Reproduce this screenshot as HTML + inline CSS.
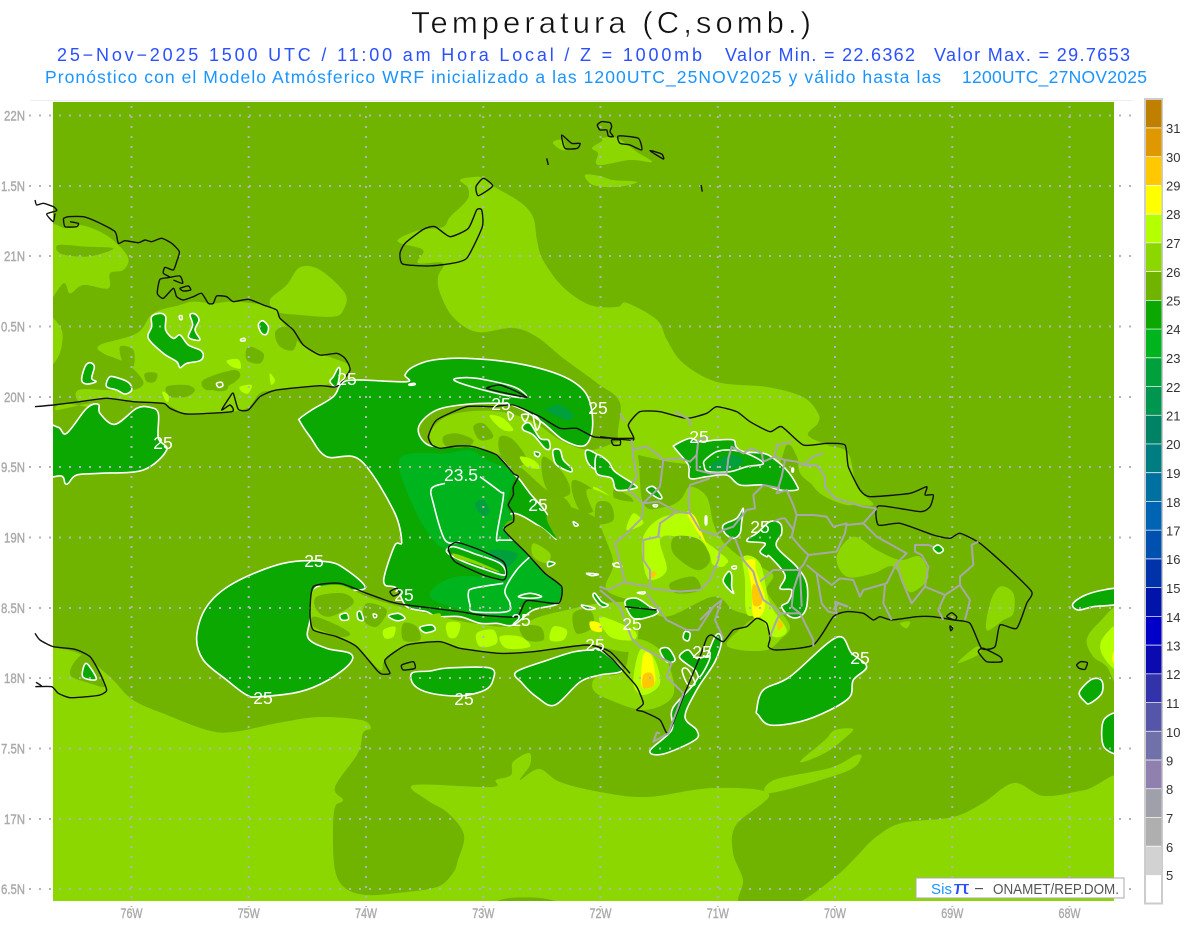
<!DOCTYPE html>
<html><head><meta charset="utf-8"><title>Temperatura</title>
<style>
html,body{margin:0;padding:0;background:#fff}
svg{display:block}
polygon,polyline,line,rect,path{vector-effect:non-scaling-stroke}
.lt{fill:#8cd700}.bs{fill:#70b400}.br{fill:#b4ff00}.ye{fill:#ffff00}.or{fill:#ffc800}
.dk{fill:#0aa800;stroke:#fff;stroke-width:1.6;stroke-linejoin:round}
.dk2{fill:#00b41e}.dk3{fill:#00a03c}
.wl{fill:none;stroke:#fff;stroke-width:1.6;stroke-linejoin:round}
.co{fill:none;stroke:#111;stroke-width:1.4;stroke-linejoin:round}
.pr{fill:none;stroke:#a8a8a8;stroke-width:2;stroke-linejoin:round}
.ax{font:14px "Liberation Sans",sans-serif;fill:#aaa;stroke:#aaa;stroke-width:.4}
.lb{font:17.5px "Liberation Sans",sans-serif;fill:#fff}
.cb{font:13px "Liberation Sans",sans-serif;fill:#333}
</style></head><body>
<svg width="1200" height="927" viewBox="0 0 1200 927" xmlns="http://www.w3.org/2000/svg">
<defs><clipPath id="m"><rect x="53" y="102" width="1061" height="799"/></clipPath></defs>
<rect width="1200" height="927" fill="#fff"/>
<text x="411" y="33" font-family="Liberation Sans" font-size="31" fill="#111" stroke="#fff" stroke-width=".5" textLength="400" lengthAdjust="spacing">Temperatura (C,somb.)</text>
<g font-family="Liberation Sans" font-size="18" fill="#2a50ff">
<text x="57" y="61" textLength="645" lengthAdjust="spacing">25−Nov−2025 1500 UTC / 11:00 am Hora Local / Z = 1000mb</text>
<text x="725" y="61" textLength="190" lengthAdjust="spacing">Valor Min. = 22.6362</text>
<text x="934" y="61" textLength="196" lengthAdjust="spacing">Valor Max. = 29.7653</text>
</g>
<g font-family="Liberation Sans" font-size="17.5" fill="#1a94ff">
<text x="45" y="83" textLength="896" lengthAdjust="spacing">Pronóstico con el Modelo Atmósferico WRF inicializado a las 1200UTC_25NOV2025 y válido hasta las</text>
<text x="962" y="83" textLength="185" lengthAdjust="spacing">1200UTC_27NOV2025</text>
</g>
<line x1="30" y1="100.5" x2="1133" y2="100.5" stroke="#eee"/>
<rect x="53" y="102" width="1061" height="799" fill="#70b400"/>
<g clip-path="url(#m)">
<!-- sea light zones -->
<polygon class="lt" points="40,645 53,647 82,655 110,677 133,700 167,715 207,730 233,732 283,722 320,717 361,720 371,728 363,733 358,753 335,787 343,800 335,807 333,833 335,870 345,888 366,895 397,893 437,887 453,873 458,860 464,835 448,813 427,800 414,785 491,787 496,780 511,775 513,762 529,753 530,765 520,780 539,769 560,782 600,792 647,797 713,788 769,794 736,825 733,853 743,880 741,905 792,905 835,877 856,857 876,837 902,823 953,817 983,803 1014,783 1044,796 1085,790 1130,782 1130,920 40,920"/>
<polygon class="bs" points="498,903 510,898 540,898 556,903"/>
<polygon class="lt" points="771,793 774,780 830,768 856,755 861,758 845,772"/>
<polygon class="lt" points="800,762 825,740 835,730 853,729 845,738 825,753"/>
<polygon class="lt" points="460,180 473,177 483,178 493,186 520,202 533,217 537,240 543,260 563,287 590,305 617,307 627,303 657,320 667,340 683,363 717,382 767,387 803,397 818,413 818,423 808,435 827,445 848,453 857,487 873,505 840,500 803,477 797,457 787,445 770,470 700,465 660,460 620,445 620,403 597,383 563,358 537,337 513,328 477,332 453,317 440,293 438,277 443,263 418,263 423,250 400,243 400,238 420,230 443,227 450,217 467,200 468,188"/>
<polygon class="lt" points="553,142 563,140 565,150 558,148"/>
<polygon class="lt" points="592,148 602,141 602,138 617,138 637,152 652,162 630,160 598,165 598,153"/>
<polygon class="lt" points="585,175 600,176 613,180 637,182 617,187 593,185"/>
<g transform="translate(0 190) scale(.33333)">
<polygon class="lt" points="130,115 200,115 240,105 300,125 350,160 385,205 370,240 330,250 325,295 250,285 210,310 190,280 130,340"/>
<polygon class="bs" points="175,165 260,170 340,175 290,195 240,200 180,190"/>
<polygon class="lt" points="130,375 185,420 175,500 130,530"/>
<polygon class="lt" points="810,330 860,285 900,232 960,240 1035,310 1030,360 1000,380 900,375 830,365"/>
<polygon class="lt" points="300,465 410,430 460,370 540,345 580,335 640,340 700,335 790,345 830,365 840,385 900,460 960,490 1040,520 1050,540 1000,580 830,600 780,610 740,655 650,670 560,672 490,640 400,635 320,625 240,635 235,600 320,600 400,600 430,575 380,520 310,490"/>
<polygon class="lt" points="170,660 270,640 290,655 190,640"/>
<polygon class="bs" points="500,590 560,585 585,600 560,620 510,620"/>
<polygon class="bs" points="435,550 470,550 465,575 440,575"/>
<polygon class="bs" points="850,410 890,430 880,480 840,470 825,430"/>
<polygon class="bs" points="610,570 700,540 720,560 680,590 620,600"/>
<polygon class="bs" points="745,470 790,490 780,520 740,510"/>
<polygon class="bs" points="640,570 680,570 680,600 640,600"/>
<polygon class="bs" points="360,470 400,480 400,530 370,520"/>
<polygon class="br" points="680,512 715,508 722,535 695,530"/>
<polygon class="br" points="720,590 755,585 745,610 725,605"/>
<polygon class="br" points="810,550 825,570 815,585 810,570"/>
<polygon class="br" points="487,605 505,615 505,635 495,630"/>
</g>
<!-- Jamaica area -->
<g transform="translate(0 560) scale(.33333)">
<polygon class="bs" points="215,320 245,285 275,295 300,340 315,380 270,370 215,350"/>
<polygon class="dk" points="590,230 620,140 700,70 850,10 980,5 1040,30 1095,85 1000,90 945,85 930,180 925,235 980,265 1050,280 1050,310 985,360 900,395 780,410 740,405 680,360 610,300"/>
<polygon class="dk" points="258,310 285,345 285,360 248,350"/>
</g>
<!-- east edge -->
<g transform="translate(960 560) scale(.33333)">
<polygon class="lt" points="480,150 415,190 380,240 400,290 440,320 480,380"/>
<polygon class="br" points="480,195 425,240 430,290 480,330"/>
<polygon class="ye" points="458,280 470,275 470,310 458,305"/>
<polygon class="dk" points="338,133 370,108 430,90 480,88 480,130 400,140 355,150"/>
<polygon class="dk" points="358,397 395,358 425,362 425,400 390,430 375,425"/>
<polygon class="dk" points="480,465 435,475 425,520 435,565 480,575"/>
</g>
<!-- Cuba darks -->
<g transform="translate(0 190) scale(.33333)">
<polygon class="dk" points="455,380 480,370 497,380 497,420 520,445 540,435 565,465 600,480 610,495 600,512 560,520 540,533 530,515 490,490 445,445 455,410"/>
<polygon class="dk" points="570,375 585,372 597,390 585,420 600,448 585,450 565,440 578,405"/>
<polygon class="dk" points="775,405 788,392 805,410 800,432 785,430"/>
<polygon class="dk" points="245,570 255,530 270,518 283,530 275,565 288,575 260,582"/>
<polygon class="dk" points="320,590 325,565 340,560 385,577 395,600 375,612 350,600"/>
<polygon class="dk" points="1000,560 1015,533 1020,545 1010,590 990,575"/>
<polygon class="dk" points="130,712 175,712 200,730 260,655 295,643 300,670 345,703 410,655 450,652 475,670 475,745 500,780 430,840 300,850 230,855 205,880 195,880 185,858 130,850"/>
<polygon class="wl" points="538,378 546,378 546,388 540,388"/>
<polygon class="wl" points="722,448 733,445 735,452 724,453"/>
<polygon class="wl" points="650,580 665,577 668,588 655,592"/>
</g>
<!-- Haiti / central -->
<g transform="translate(300 340) scale(.33333)">
<polygon class="dk" points="170,120 320,125 315,105 340,80 400,60 500,55 650,70 780,105 850,150 875,210 875,280 850,318 790,300 730,250 660,205 600,190 480,195 400,215 355,265 385,315 470,318 520,320 590,345 640,400 660,420 690,460 740,520 770,590 765,597 720,560 640,520 610,570 680,640 735,700 785,740 775,790 700,810 640,855 590,850 540,850 480,830 410,830 380,815 320,800 290,745 255,735 255,700 285,615 305,605 280,510 180,360 80,350 30,290 0,245 0,235 35,210 100,170 125,130"/>
<polygon class="dk2" points="300,355 440,340 510,330 560,360 640,400 620,490 640,545 610,570 690,640 780,740 770,785 670,785 640,830 530,820 400,780 405,740 470,710 560,710 610,715 440,630 400,600 340,500"/>
<polygon class="dk3" points="525,490 550,480 568,510 555,530 535,515"/>
<polygon class="dk3" points="570,630 650,640 625,680 590,665"/>
<polygon class="dk3" points="740,210 780,195 820,225 800,240"/>
<polygon class="dk" points="470,115 530,115 640,140 680,170 640,170 550,150 470,125"/>
<polygon class="wl" points="327,133 342,130 345,134 330,136"/>
<!-- N Haiti land -->
<polygon class="lt" points="390,280 430,235 500,215 600,215 700,245 780,300 870,330 1000,310 1030,490 1100,500 1200,470 1200,620 1100,700 1000,720 960,700 930,640 880,620 840,560 800,480 740,450 660,380 600,345 530,325 470,320 410,325"/>
<polygon class="bs" points="430,290 470,280 520,300 500,320 440,320"/>
<polygon class="bs" points="520,260 550,250 580,290 540,300"/>
<polygon class="bs" points="600,290 640,300 680,360 640,380 600,340"/>
<polygon class="bs" points="730,350 790,400 810,460 760,470 730,420"/>
<polygon class="bs" points="820,420 880,450 900,500 850,520 820,470"/>
<polygon class="bs" points="940,450 990,470 1000,500 960,520"/>
<polygon class="bs" points="800,500 900,540 950,600 890,630 830,560"/>
<polygon class="br" points="570,225 610,235 640,270 610,270 580,245"/>
<polygon class="br" points="660,350 700,360 720,385 680,380"/>
<polygon class="br" points="880,440 930,470 900,480"/>
<polygon class="br" points="960,510 1010,520 1000,550 960,540"/>
<!-- dark wedge SE Haiti -->
<polygon class="bs" points="615,570 680,640 735,700 785,740 785,790 840,810 900,790 960,740 1000,720 940,620 880,610 800,520 740,530 770,600 720,560 640,540"/>
<polygon class="lt" points="700,610 750,640 740,670 700,650"/>
<polygon class="lt" points="940,700 990,680 1000,720 960,745"/>
<polygon class="or" points="972,690 990,685 985,710 975,708"/>
<!-- S peninsula -->
<polygon class="lt" points="40,750 120,735 200,770 300,800 380,820 520,850 640,860 720,830 800,810 900,790 1000,800 1000,930 860,915 700,935 600,940 480,925 420,905 320,915 255,960 240,990 170,920 110,890 40,870 30,820"/>
<polygon class="bs" points="50,770 130,760 160,790 90,830 50,810"/>
<polygon class="bs" points="40,830 100,850 150,880 120,890 40,860"/>
<polygon class="bs" points="200,790 260,810 230,860 190,840"/>
<polygon class="bs" points="310,850 350,860 360,900 310,900"/>
<polygon class="bs" points="820,820 870,810 880,860 830,880"/>
<polygon class="bs" points="660,860 720,860 730,900 680,900"/>
<polygon class="br" points="250,870 285,860 280,890 255,895"/>
<polygon class="br" points="440,850 480,850 470,890 445,890"/>
<polygon class="br" points="530,880 580,870 590,910 540,920"/>
<polygon class="br" points="600,890 660,890 690,920 620,925"/>
<polygon class="br" points="760,860 800,870 790,900 750,900"/>
<polygon class="br" points="900,830 1000,870 1000,900 930,890"/>
<polygon class="ye" points="870,845 900,850 905,875 875,870"/>
<polygon class="lt" points="395,825 420,820 420,835 400,835"/>
<polygon class="dk" points="655,770 690,760 725,770 690,775"/>
<polygon class="dk" points="120,825 140,820 145,838 125,840"/>
<polygon class="dk" points="172,818 182,815 190,840 175,838"/>
<polygon class="dk" points="220,822 230,825 228,832 222,832"/>
<polygon class="dk" points="265,828 295,820 315,835 290,842"/>
<polygon class="dk" points="360,862 395,855 405,870 375,878"/>
<!-- N Haiti holes -->
<polygon class="dk" points="670,255 690,250 720,295 745,300 750,325 735,325 700,285 670,270"/>
<polygon class="wl" points="625,215 640,225 630,240 625,228"/>
<polygon class="wl" points="665,225 685,225 675,245"/>
<polygon class="wl" points="700,225 720,245 710,270"/>
<polygon class="dk" points="760,330 780,330 790,360 815,385 810,395 770,375 760,350"/>
<polygon class="dk" points="705,335 720,340 715,350 705,345"/>
<polygon class="dk" points="820,545 835,555 825,558"/>
<polygon class="dk" points="745,665 765,670 745,680"/>
<polygon class="dk" points="860,700 895,703 875,707"/>
<polygon class="dk" points="885,760 905,785 925,795 905,800 880,770"/>
<polygon class="dk" points="845,795 885,805 860,808"/>
<polygon class="dk" points="940,670 965,682 945,680"/>
<polygon class="dk" points="860,330 900,350 940,400 1000,435 950,450 935,405 880,385 860,360"/>
<polygon class="dk" points="440,635 460,620 520,640 600,670 615,705 560,690 480,660"/>
<polygon class="lt" points="460,640 520,660 590,690 590,695 520,670 470,655"/>
<!-- 23.5 contour -->
<polyline class="wl" points="540,410 600,455 610,470 590,590 600,600 640,600"/>
<polyline class="wl" points="435,430 395,445 400,490 435,600 480,605"/>
<polyline class="wl" points="610,730 520,745 505,760 510,795 520,815 620,815 630,790 615,750 650,690 690,650"/>
</g>
<!-- sea blobs south of Haiti -->
<polygon class="dk" points="412,673 430,671 448,668 490,668 493,680 485,690 460,696 430,693 414,685"/>
<polygon class="dk" points="516,672 548,660 573,652 590,650 600,650 622,670 600,675 580,682 555,705 538,698 522,683"/>
<!-- DR -->
<g transform="translate(600 390) scale(.33333)">
<polygon class="lt" points="-40,300 60,330 120,340 170,370 240,330 270,290 320,320 340,400 365,450 420,500 500,540 520,560 500,600 530,650 570,710 540,750 500,780 420,780 380,760 440,700 460,680 400,660 340,620 200,680 120,640 20,600 40,520 10,430"/>
<polygon class="lt" points="100,750 180,780 220,870 210,930 130,960 30,930 -20,900 -10,860 70,845"/>
<polygon class="lt" points="710,500 760,440 830,480 900,510 960,500 985,560 950,600 920,600 880,530 820,550 740,560"/>
<polygon class="lt" points="1170,640 1200,590 1240,610 1240,670 1210,690 1160,720"/>
<polygon class="lt" points="1075,815 1130,770 1140,790 1090,815"/>
<polygon class="lt" points="900,700 930,695 920,715"/>
<polygon class="lt" points="700,280 780,330 740,345 660,310 630,260 690,240"/>
<polygon class="br" points="130,440 180,385 265,370 290,400 300,440 350,480 385,515 340,525 320,480 230,440 180,450 200,540 150,570 130,520"/>
<polygon class="br" points="100,370 130,400 80,420"/>
<polygon class="br" points="340,500 380,510 370,530 345,525"/>
<polygon class="br" points="430,500 480,520 510,640 560,720 520,740 480,680 440,670 435,570"/>
<polygon class="bs" points="225,440 300,450 330,510 290,540 220,490"/>
<polygon class="bs" points="210,580 280,560 300,600 230,610"/>
<polygon class="bs" points="-10,340 30,340 40,390 -10,400"/>
<polygon class="ye" points="260,368 285,380 310,440 320,465 295,430"/>
<polygon class="ye" points="438,512 465,510 468,540 495,620 488,670 460,680 455,600 445,540"/>
<polygon class="or" points="458,585 480,600 485,640 460,645"/>
<polygon class="or" points="535,690 550,705 535,720"/>
<polygon class="or" points="150,545 170,550 155,565"/>
<polygon class="br" points="120,780 160,800 180,880 130,915 100,880"/>
<polygon class="ye" points="130,795 155,800 165,880 125,890"/>
<polygon class="or" points="130,855 155,850 162,885 130,895"/>
<polygon class="dk" points="225,165 270,145 300,155 350,150 400,150 408,170 430,185 490,190 520,205 560,240 590,285 590,300 540,300 490,285 420,285 380,255 320,260 270,265 265,225 225,175"/>
<polygon class="dk" points="315,210 350,185 390,180 440,190 490,220 440,230 390,245 325,245 312,225"/>
<polygon class="dk3" points="330,225 390,195 430,210 400,235 340,240"/>
<polygon class="dk" points="-10,195 25,215 45,245 105,285 105,295 50,300 35,265 -10,250"/>
<polygon class="dk" points="140,300 160,290 185,320 175,325"/>
<polygon class="dk" points="370,405 410,385 430,355 425,395 420,430 400,445 375,430"/>
<polygon class="dk" points="445,445 470,430 510,395 540,400 545,430 530,470 590,530 620,580 620,650 600,680 570,680 545,650 565,635 575,600 540,595 555,555 510,500 500,500 480,485 495,460 445,455"/>
<polygon class="dk" points="370,575 385,545 395,555 395,590 400,610"/>
<polygon class="dk" points="470,960 490,900 570,860 710,742 755,790 800,830 760,870 750,920 690,960 600,995 510,1005 475,975"/>
<polygon class="dk" points="150,1082 215,1020 218,955 290,870 345,740 365,750 345,815 290,900 255,980 290,1020 285,1050 190,1092"/>
<polygon class="dk" points="240,795 265,780 290,805 330,800 300,860 285,840 245,810"/>
<polygon class="wl" points="250,835 265,840 285,880 265,885 248,850"/>
<polygon class="dk" points="180,780 205,775 225,810 200,815"/>
<polygon class="dk" points="255,725 270,730 265,752 250,745"/>
<polygon class="dk" points="75,635 110,625 150,650 175,665 150,680 100,685"/>
<polygon class="dk" points="1000,475 1015,465 1030,480 1015,490"/>
<polygon class="wl" points="40,525 52,518 65,530 48,530"/>
<polygon class="wl" points="160,345 172,345 170,350 162,350"/>
<polygon class="wl" points="112,608 135,606 130,612"/>
<polygon class="wl" points="576,235 580,235 580,245 576,245"/>
<polygon class="wl" points="316,380 320,380 320,402 316,402"/>
<polygon class="wl" points="396,530 408,528 408,536 398,536"/>
</g>
</g>
<!-- grid -->
<g stroke="#b4b4b4" stroke-width="2" stroke-dasharray="2 8" fill="none">
<line x1="29" y1="115.5" x2="1134" y2="115.5"/><line x1="29" y1="186" x2="1134" y2="186"/><line x1="29" y1="256" x2="1134" y2="256"/><line x1="29" y1="326.5" x2="1134" y2="326.5"/><line x1="29" y1="397" x2="1134" y2="397"/><line x1="29" y1="467" x2="1134" y2="467"/><line x1="29" y1="537.5" x2="1134" y2="537.5"/><line x1="29" y1="608" x2="1134" y2="608"/><line x1="29" y1="678" x2="1134" y2="678"/><line x1="29" y1="748.5" x2="1134" y2="748.5"/><line x1="29" y1="819" x2="1134" y2="819"/><line x1="29" y1="889" x2="1134" y2="889"/>
<line x1="131.5" y1="106" x2="131.5" y2="907"/><line x1="248.7" y1="106" x2="248.7" y2="907"/><line x1="366" y1="106" x2="366" y2="907"/><line x1="483.3" y1="106" x2="483.3" y2="907"/><line x1="600.5" y1="106" x2="600.5" y2="907"/><line x1="717.8" y1="106" x2="717.8" y2="907"/><line x1="835" y1="106" x2="835" y2="907"/><line x1="952.3" y1="106" x2="952.3" y2="907"/><line x1="1069.5" y1="106" x2="1069.5" y2="907"/>
</g>
<!-- coasts black -->
<g transform="translate(0 190) scale(.33333)">
<polyline class="co" points="105,30 110,45 130,40 160,50 170,62 140,72 160,95 165,70"/>
<polyline class="co" points="190,85 205,80 250,80 290,95 345,125 355,160 375,152 415,158 435,150 455,155 485,145 515,160 538,185 530,215 520,240 495,232 490,250 510,262 480,268 472,310 490,325 520,295 530,320 550,330 580,320 605,310 625,340 640,340 650,318 680,320 700,335 745,328 790,345 830,360 840,385 880,420 910,465 960,495 1010,490 1035,505 1050,540 1010,590 960,587 830,600 780,620 745,660 715,658 700,610 690,620 665,660 690,645 695,665 560,672 510,655 490,640 400,635 320,625 240,635 160,645 105,650"/>
<polyline class="co" points="190,85 195,110 230,110 235,100 210,95"/>
<polyline class="co" points="510,262 540,258 548,280 520,270"/>
<polygon class="co" points="540,295 565,288 572,300 550,303"/>
</g>
<g transform="translate(0 560) scale(.33333)">
<polyline class="co" points="105,220 120,240 160,260 225,268 270,290 300,340 320,390 300,405 262,410 210,413 175,400 155,380 108,380 125,378 108,367"/>
</g>
<g transform="translate(390 110) scale(.33333)">
<polygon class="co" points="622,45 635,35 660,38 665,50 660,65 670,80 655,78 650,60 630,60"/>
<polygon class="co" points="685,78 745,85 755,120 720,105 690,100"/>
<polygon class="co" points="780,122 815,132 820,147"/>
<polygon class="co" points="515,75 545,100 570,100 562,115 525,115"/>
<polyline class="co" points="470,145 475,165"/>
<polygon class="co" points="258,230 280,205 308,228 265,257"/>
<polygon class="co" points="30,430 45,400 100,358 135,350 180,380 235,355 260,300 275,300 277,350 230,445 175,462 110,468 38,462"/>
<polyline class="co" points="933,225 937,245"/>
</g>
<g transform="translate(960 560) scale(.33333)">
<polygon class="co" points="350,315 362,305 382,308 375,328 358,325"/>
</g>
<g transform="translate(300 340) scale(.33333)">
<polyline class="co" points="395,315 385,290 410,240 500,200 580,200 640,195 720,230 780,265 830,265 880,290 940,295 1000,295"/>
<polyline class="co" points="395,315 420,325 470,318 520,320 590,345 640,400 655,410 640,440 640,465 625,495 640,520 640,545 612,570 680,640 735,700 785,740 775,790 680,782 650,830 540,825 480,815 320,795 270,785 200,760 120,730 40,740 30,820 40,870 110,890 170,920 230,990 245,1002 270,1000 255,960 320,915 420,905 480,925 600,940 700,935 860,915 930,935 990,1000"/>
<polygon class="co" points="445,625 470,607 540,630 610,665 620,700 610,720 550,705 465,665"/>
<polygon class="co" points="560,145 600,135 650,155 680,172 620,160"/>
<polygon class="co" points="270,755 290,745 298,760 280,768"/>
<polygon class="co" points="305,975 340,965 345,985 310,990"/>
</g>
<g transform="translate(600 390) scale(.33333)">
<polyline class="co" points="0,140 100,150 85,105 120,65 180,65 260,85 320,70 350,50 410,65 450,95 510,125 545,110 610,165 680,160 735,165 745,230 780,300 810,320 930,310 980,290 975,315 1000,315 990,350 960,365 835,348 835,405 900,400 1000,435 1050,445 1080,430 1140,460 1220,530 1295,605 1280,640 1250,715 1200,705 1185,770 1145,775 1110,700 1060,690 1000,680 950,680 875,690 840,680 820,690 790,670 740,665 700,680 640,765 530,780 505,770 510,745 500,700 470,685 440,710 400,720 370,755 335,735 320,745 300,800 250,920 205,1030 180,990 130,965 110,960 130,940 110,890 80,855 40,810 0,775"/>
<polygon class="co" points="1135,785 1150,775 1200,800 1205,815 1160,815"/>
<polygon class="co" points="1040,680 1055,668 1070,680 1065,690"/>
<polygon class="co" points="1050,708 1058,715 1052,722"/>
<polygon class="co" points="35,150 60,150 60,165 40,165"/>
<polyline class="co" points="75,650 120,655 170,660"/>
</g>
<!-- provinces -->
<g transform="translate(600 390) scale(.33333)">
<polyline class="pr" points="95,150 100,200 110,260 85,300 130,340 125,385 80,430 45,460 75,575 25,600 0,590"/>
<polyline class="pr" points="60,70 75,95"/>
<polyline class="pr" points="225,65 270,90 270,110"/>
<polyline class="pr" points="100,178 140,170 175,195 190,210 240,205 270,215 290,195 295,150 330,140"/>
<polyline class="pr" points="290,195 290,240 330,250 380,250 385,205 395,170 430,190 455,175 485,190 490,215 525,200 530,165 575,155"/>
<polyline class="pr" points="525,200 555,210 590,215 610,225 650,225 675,260 675,290 705,325 790,350 830,355"/>
<polyline class="pr" points="610,225 640,200 670,190"/>
<polyline class="pr" points="555,210 545,260 530,310 560,300 580,345 590,375"/>
<polyline class="pr" points="190,210 180,290 130,340 175,335 230,365 270,370"/>
<polyline class="pr" points="230,365 180,400 175,440 130,450 130,510 150,540 150,590 75,578"/>
<polyline class="pr" points="270,285 265,330 270,370 300,420 345,435 370,420 400,410 440,360 465,355 460,315 490,285 540,295"/>
<polyline class="pr" points="270,285 330,265"/>
<polyline class="pr" points="400,440 360,480 355,510 330,570 300,600 240,605 150,595"/>
<polyline class="pr" points="405,445 430,510 460,545 470,580 490,630 520,650 540,670 530,690 510,740"/>
<polyline class="pr" points="555,385 580,420 575,440 600,470 625,495 610,525 595,540 520,540 480,575"/>
<polyline class="pr" points="520,395 545,385 555,385"/>
<polyline class="pr" points="590,375 640,375 680,380 700,410 740,400 735,430 710,485 625,495"/>
<polyline class="pr" points="590,375 575,440"/>
<polyline class="pr" points="740,405 790,400 830,440 920,490 890,520 860,580 790,600 780,620 760,570 720,565 695,585 650,550 620,525"/>
<polyline class="pr" points="650,550 665,640 685,665 710,670 705,635 745,650"/>
<polyline class="pr" points="790,400 830,355"/>
<polyline class="pr" points="855,585 850,640 875,690"/>
<polyline class="pr" points="890,520 905,570 935,640 975,590 985,530 965,495 945,485 945,465 985,465 1000,470"/>
<polyline class="pr" points="975,590 1035,615 1015,660 1030,690"/>
<polyline class="pr" points="1035,615 1080,585 1110,630 1095,690"/>
<polyline class="pr" points="1080,585 1080,560 1120,525 1115,465 1135,455"/>
<polyline class="pr" points="540,670 600,670 640,750 640,770"/>
<polyline class="pr" points="600,670 575,650 580,600 600,540 605,650"/>
<polyline class="pr" points="95,745 120,770 215,820 200,860 250,910"/>
<polyline class="pr" points="140,610 200,690 260,720 295,720 340,650 300,690"/>
<polyline class="pr" points="340,650 365,630 345,690 370,745"/>
<polyline class="pr" points="0,600 60,650 95,745"/>
<polyline class="pr" points="250,910 205,1030 160,1055 170,1028 180,1030"/>
<polyline class="pr" points="700,660 715,640 740,650"/>
</g>
<g class="lb" text-anchor="middle">
<text x="347" y="385">25</text><text x="501" y="410">25</text><text x="598" y="414">25</text><text x="699" y="443">25</text><text x="163" y="449">25</text><text x="461" y="481">23.5</text><text x="538" y="511">25</text><text x="760" y="533">25</text><text x="314" y="567">25</text><text x="404" y="601">25</text><text x="521" y="626">25</text><text x="632" y="630">25</text><text x="595" y="651">25</text><text x="702" y="658">25</text><text x="860" y="664">25</text><text x="263" y="704">25</text><text x="464" y="705">25</text>
</g>
<!-- axis -->
<g class="ax" text-anchor="end">
<text x="25" y="120.5" textLength="21" lengthAdjust="spacingAndGlyphs">22N</text><text x="25" y="191" textLength="24" lengthAdjust="spacingAndGlyphs">1.5N</text><text x="25" y="261" textLength="21" lengthAdjust="spacingAndGlyphs">21N</text><text x="25" y="331.5" textLength="24" lengthAdjust="spacingAndGlyphs">0.5N</text><text x="25" y="402" textLength="21" lengthAdjust="spacingAndGlyphs">20N</text><text x="25" y="472" textLength="24" lengthAdjust="spacingAndGlyphs">9.5N</text><text x="25" y="542.5" textLength="21" lengthAdjust="spacingAndGlyphs">19N</text><text x="25" y="613" textLength="24" lengthAdjust="spacingAndGlyphs">8.5N</text><text x="25" y="683" textLength="21" lengthAdjust="spacingAndGlyphs">18N</text><text x="25" y="753.5" textLength="24" lengthAdjust="spacingAndGlyphs">7.5N</text><text x="25" y="824" textLength="21" lengthAdjust="spacingAndGlyphs">17N</text><text x="25" y="894" textLength="24" lengthAdjust="spacingAndGlyphs">6.5N</text>
</g>
<g class="ax" text-anchor="middle">
<text x="131.5" y="918" textLength="22" lengthAdjust="spacingAndGlyphs">76W</text><text x="248.7" y="918" textLength="22" lengthAdjust="spacingAndGlyphs">75W</text><text x="366" y="918" textLength="22" lengthAdjust="spacingAndGlyphs">74W</text><text x="483.3" y="918" textLength="22" lengthAdjust="spacingAndGlyphs">73W</text><text x="600.5" y="918" textLength="22" lengthAdjust="spacingAndGlyphs">72W</text><text x="717.8" y="918" textLength="22" lengthAdjust="spacingAndGlyphs">71W</text><text x="835" y="918" textLength="22" lengthAdjust="spacingAndGlyphs">70W</text><text x="952.3" y="918" textLength="22" lengthAdjust="spacingAndGlyphs">69W</text><text x="1069.5" y="918" textLength="22" lengthAdjust="spacingAndGlyphs">68W</text>
</g>
<!-- logo -->
<rect x="916" y="878" width="208" height="20" fill="#fff" stroke="#aaa" stroke-width="1"/>
<text x="931" y="894" font-family="Liberation Sans" font-size="15" fill="#1a94ff" textLength="21">Sis</text>
<text x="953" y="894" font-family="Liberation Sans" font-size="18" fill="#2a50ff" textLength="17" lengthAdjust="spacingAndGlyphs">π</text>
<rect x="975" y="888" width="8" height="1.2" fill="#555"/>
<text x="993" y="894" font-family="Liberation Sans" font-size="15" fill="#555" textLength="126" lengthAdjust="spacingAndGlyphs">ONAMET/REP.DOM.</text>
<!-- colorbar -->
<rect x="1145" y="99" width="17" height="804.5" fill="#fff" stroke="#ccc" stroke-width="2"/>
<g stroke="none">
<rect x="1146" y="100" width="15.5" height="27.5" fill="#bf8000"/>
<rect x="1146" y="128.3" width="15.5" height="28" fill="#df9800"/>
<rect x="1146" y="157" width="15.5" height="28" fill="#ffc800"/>
<rect x="1146" y="185.8" width="15.5" height="28" fill="#ffff00"/>
<rect x="1146" y="214.5" width="15.5" height="28" fill="#b4ff00"/>
<rect x="1146" y="243.2" width="15.5" height="28" fill="#8cd700"/>
<rect x="1146" y="272" width="15.5" height="28" fill="#70b400"/>
<rect x="1146" y="300.7" width="15.5" height="28" fill="#0aa800"/>
<rect x="1146" y="329.4" width="15.5" height="28" fill="#00b41e"/>
<rect x="1146" y="358.2" width="15.5" height="28" fill="#00a03c"/>
<rect x="1146" y="386.9" width="15.5" height="28" fill="#009650"/>
<rect x="1146" y="415.6" width="15.5" height="28" fill="#008264"/>
<rect x="1146" y="444.3" width="15.5" height="28" fill="#007d80"/>
<rect x="1146" y="473.1" width="15.5" height="28" fill="#0070a0"/>
<rect x="1146" y="501.8" width="15.5" height="28" fill="#0064b4"/>
<rect x="1146" y="530.5" width="15.5" height="28" fill="#0050b0"/>
<rect x="1146" y="559.3" width="15.5" height="28" fill="#0032aa"/>
<rect x="1146" y="588" width="15.5" height="28" fill="#0014aa"/>
<rect x="1146" y="616.7" width="15.5" height="28" fill="#0000c8"/>
<rect x="1146" y="645.5" width="15.5" height="28" fill="#0a0ab0"/>
<rect x="1146" y="674.2" width="15.5" height="28" fill="#3232aa"/>
<rect x="1146" y="702.9" width="15.5" height="28" fill="#5555aa"/>
<rect x="1146" y="731.6" width="15.5" height="28" fill="#7070aa"/>
<rect x="1146" y="760.4" width="15.5" height="28" fill="#9080b0"/>
<rect x="1146" y="789.1" width="15.5" height="28" fill="#a0a0aa"/>
<rect x="1146" y="817.8" width="15.5" height="28" fill="#afafaf"/>
<rect x="1146" y="846.6" width="15.5" height="28.5" fill="#d2d2d2"/>
</g>
<g class="cb">
<text x="1166" y="133">31</text><text x="1166" y="162">30</text><text x="1166" y="190.5">29</text><text x="1166" y="219">28</text><text x="1166" y="248">27</text><text x="1166" y="277">26</text><text x="1166" y="305.5">25</text><text x="1166" y="334">24</text><text x="1166" y="363">23</text><text x="1166" y="392">22</text><text x="1166" y="420.5">21</text><text x="1166" y="449">20</text><text x="1166" y="478">19</text><text x="1166" y="507">18</text><text x="1166" y="535.5">17</text><text x="1166" y="564">16</text><text x="1166" y="593">15</text><text x="1166" y="622">14</text><text x="1166" y="650.5">13</text><text x="1166" y="679">12</text><text x="1166" y="708">11</text><text x="1166" y="737">10</text><text x="1166" y="765.5">9</text><text x="1166" y="794">8</text><text x="1166" y="823">7</text><text x="1166" y="852">6</text><text x="1166" y="880">5</text>
</g>
</svg>
<script>
document.querySelectorAll('polygon,polyline').forEach(function(e){
var c=e.getAttribute('class');if(c=='pr')return;
var p=e.getAttribute('points').trim().split(/\s+/).map(function(s){return s.split(',').map(Number)}),cl=e.tagName=='polygon',n=p.length;
if(n<3)return;
var k=c=='co'?10:6,g=function(i){return cl?p[(i+n)%n]:p[Math.max(0,Math.min(n-1,i))]},d='M'+p[0][0]+' '+p[0][1],m=cl?n:n-1;
for(var i=0;i<m;i++){var a=g(i-1),b=g(i),q=g(i+1),f=g(i+2);
d+='C'+[b[0]+(q[0]-a[0])/k,b[1]+(q[1]-a[1])/k,q[0]-(f[0]-b[0])/k,q[1]-(f[1]-b[1])/k,q[0],q[1]].join(' ');}
if(cl)d+='Z';
var t=document.createElementNS('http://www.w3.org/2000/svg','path');t.setAttribute('class',c);t.setAttribute('d',d);e.parentNode.replaceChild(t,e);
});
</script>
</body></html>
